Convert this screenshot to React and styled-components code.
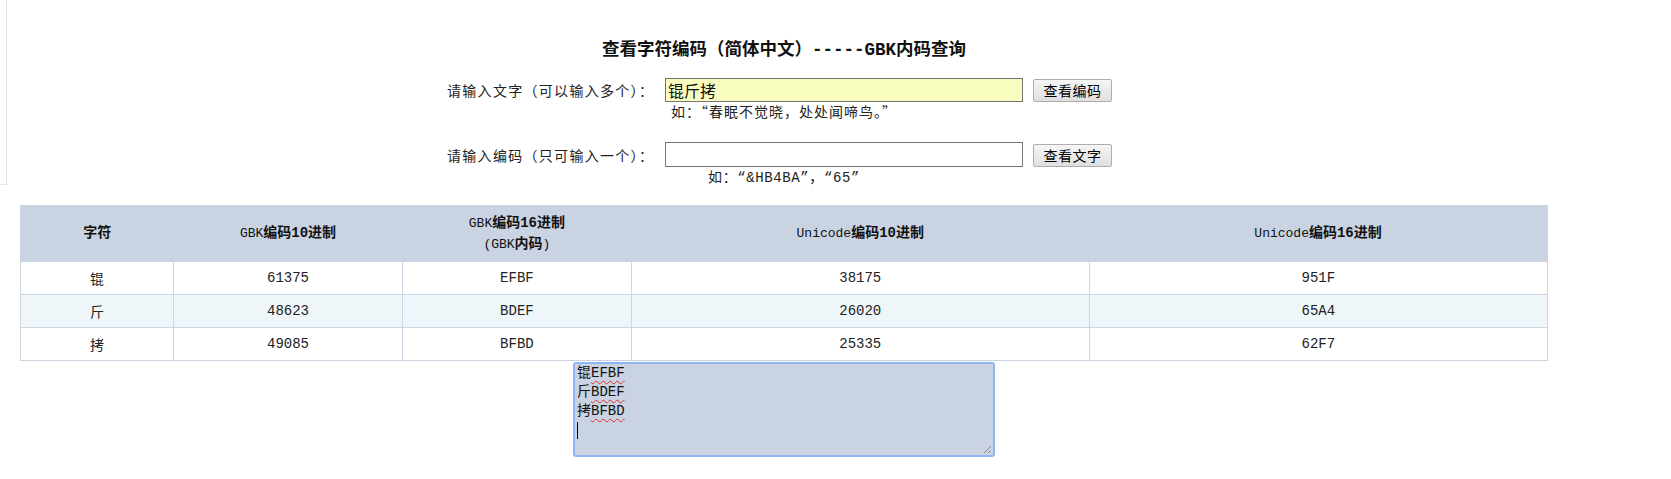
import React from 'react';
import styled, { createGlobalStyle } from 'styled-components';

const GlobalStyle = createGlobalStyle`
  html, body { margin: 0; padding: 0; background: #fff; }
  body {
    font-family: "Noto Sans CJK SC", "Liberation Sans", sans-serif;
    font-size: 14px;
    color: #111;
  }
`;

const MONO = '"Liberation Mono", "Noto Sans CJK SC", monospace';
const CJK = '"Noto Sans CJK SC", "Liberation Sans", sans-serif';

const Shell = styled.div`
  position: relative;
  overflow: hidden;
  min-height: 479px;
`;

const SideTab = styled.div`
  position: absolute;
  top: -12px;
  left: -200px;
  width: 205px;
  height: 195px;
  border: 1px solid #e4e4e4;
  background: #fff;
`;

const Page = styled.div`
  width: 1528px;
  margin-left: 20px;
  padding-top: 38px;
`;

const Title = styled.h1`
  margin: 0;
  font-family: ${MONO};
  font-size: 17.5px;
  line-height: 24px;
  font-weight: 700;
  text-align: center;
  color: #111;
`;

const FormRow = styled.div`
  display: flex;
  align-items: center;
  justify-content: center;
  padding-right: 9px;
  height: 25px;
  margin-top: ${(p) => p.$mt}px;
`;

const Label = styled.label`
  width: 200px;
  margin-right: 18px;
  text-align: right;
  white-space: nowrap;
  font-family: ${CJK};
  font-size: 14px;
  letter-spacing: 1.3px;
  line-height: 20px;
  color: #222;
`;

const TextInput = styled.input`
  box-sizing: border-box;
  width: 358px;
  height: ${(p) => p.$h}px;
  margin: 0;
  padding: 0 2px;
  border: 1px solid #767676;
  background: ${(p) => p.$bg};
  font-family: ${CJK};
  font-size: 16px;
  color: #111;
  outline: none;
`;

const Button = styled.button`
  box-sizing: border-box;
  width: 79px;
  height: 23px;
  margin: ${(p) => p.$offset}px 0 0 10px;
  padding: 0;
  border: 1px solid #adadad;
  border-radius: 2px;
  background: linear-gradient(#f6f6f6, #dfdfdf);
  font-family: ${CJK};
  font-size: 14px;
  letter-spacing: 0.5px;
  line-height: 21px;
  color: #000;
`;

const Hint = styled.div`
  margin-top: ${(p) => p.$mt}px;
  text-align: center;
  font-family: ${(p) => (p.$mono ? MONO : CJK)};
  font-size: 14px;
  letter-spacing: ${(p) => (p.$mono ? 0.6 : 1)}px;
  line-height: 18px;
  color: #222;
`;

const DataTable = styled.table`
  width: 100%;
  margin-top: 18px;
  border-collapse: collapse;
  table-layout: fixed;
  border: 1px solid #c9d3e3;
  font-family: ${MONO};
  font-size: 14px;
  color: #222;
`;

const HeadCell = styled.th`
  width: ${(p) => p.$w};
  height: 55px;
  padding: 0;
  background: #c9d3e1;
  font-weight: 700;
  font-size: 14px;
  line-height: 21px;
  color: #111;
`;

const Code = styled.span`
  font-weight: 400;
  font-size: 13px;
`;

const BodyRow = styled.tr`
  background: ${(p) => (p.$alt ? '#eff6fa' : '#fff')};
`;

const Cell = styled.td`
  height: 32px;
  padding: 0;
  text-align: center;
  border: 1px solid #cbd5e4;
`;

const Output = styled.div`
  position: relative;
  box-sizing: border-box;
  width: 422px;
  height: 95px;
  margin: 1px auto 0;
  padding: 0 2px;
  border: 2px solid #8fb5f5;
  border-radius: 3px;
  background: #c9d3e1;
  font-family: ${MONO};
  font-size: 14px;
  line-height: 19px;
  color: #111;
`;

const Misspelt = styled.span`
  text-decoration: underline wavy #e0322f;
  text-decoration-thickness: 1px;
  text-underline-offset: 3px;
`;

const Caret = styled.span`
  display: inline-block;
  width: 1px;
  height: 17px;
  background: #000;
  vertical-align: middle;
`;

const Grip = styled.svg`
  position: absolute;
  right: 1px;
  bottom: 1px;
`;

const rows = [
  { ch: '锟', gbk10: '61375', gbk16: 'EFBF', u10: '38175', u16: '951F' },
  { ch: '斤', gbk10: '48623', gbk16: 'BDEF', u10: '26020', u16: '65A4' },
  { ch: '拷', gbk10: '49085', gbk16: 'BFBD', u10: '25335', u16: '62F7' },
];

export default function App() {
  return (
    <Shell>
      <GlobalStyle />
      <SideTab />
      <Page>
        <Title>查看字符编码（简体中文）-----GBK内码查询</Title>

        <FormRow $mt={15}>
          <Label>请输入文字（可以输入多个）：</Label>
          <TextInput $h={24} $bg="#f9fcbf" defaultValue="锟斤拷" />
          <Button $offset={2}>查看编码</Button>
        </FormRow>
        <Hint $mt={0}>如：“春眠不觉晓，处处闻啼鸟。”</Hint>

        <FormRow $mt={22}>
          <Label>请输入编码（只可输入一个）：</Label>
          <TextInput $h={25} $bg="#fff" defaultValue="" />
          <Button $offset={1}>查看文字</Button>
        </FormRow>
        <Hint $mt={2} $mono>如：“&amp;HB4BA”，“65”</Hint>

        <DataTable>
          <thead>
            <tr>
              <HeadCell $w="10%">字符</HeadCell>
              <HeadCell $w="15%"><Code>GBK</Code>编码10进制</HeadCell>
              <HeadCell $w="15%">
                <Code>GBK</Code>编码16进制
                <br />
                <Code>(GBK</Code>内码<Code>)</Code>
              </HeadCell>
              <HeadCell $w="30%"><Code>Unicode</Code>编码10进制</HeadCell>
              <HeadCell $w="30%"><Code>Unicode</Code>编码16进制</HeadCell>
            </tr>
          </thead>
          <tbody>
            {rows.map((r, i) => (
              <BodyRow key={r.ch} $alt={i === 1}>
                <Cell>{r.ch}</Cell>
                <Cell>{r.gbk10}</Cell>
                <Cell>{r.gbk16}</Cell>
                <Cell>{r.u10}</Cell>
                <Cell>{r.u16}</Cell>
              </BodyRow>
            ))}
          </tbody>
        </DataTable>

        <Output role="textbox" aria-multiline="true">
          {rows.map((r) => (
            <div key={r.ch}>
              {r.ch}
              <Misspelt>{r.gbk16}</Misspelt>
            </div>
          ))}
          <div>
            <Caret />
          </div>
          <Grip width="10" height="10" viewBox="0 0 10 10">
            <line x1="2" y1="9" x2="9" y2="2" stroke="#8a8a8a" strokeWidth="1" />
            <line x1="6" y1="9" x2="9" y2="6" stroke="#8a8a8a" strokeWidth="1" />
          </Grip>
        </Output>
      </Page>
    </Shell>
  );
}
